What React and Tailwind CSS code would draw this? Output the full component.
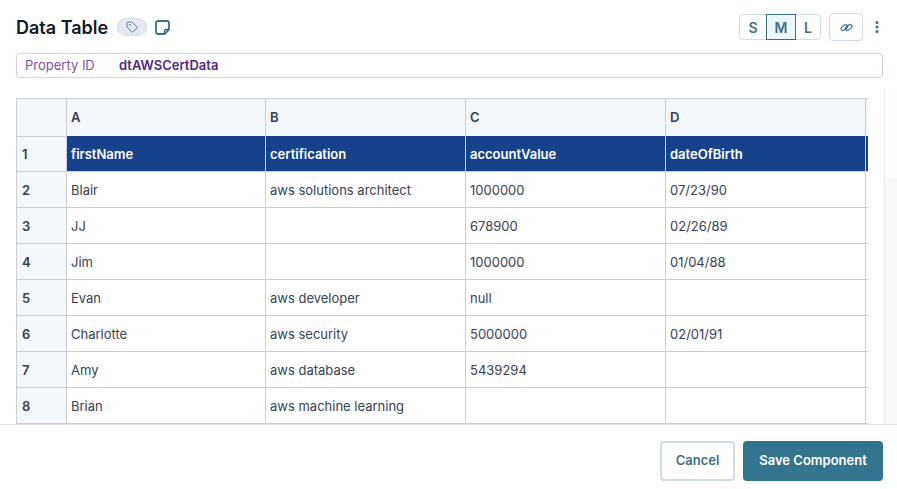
import { Tag } from "lucide-react";

const columns = ["A", "B", "C", "D"];
const headers = ["firstName", "certification", "accountValue", "dateOfBirth"];
const rows = [
    ["Blair", "aws solutions architect", "1000000", "07/23/90"],
    ["JJ", "", "678900", "02/26/89"],
    ["Jim", "", "1000000", "01/04/88"],
    ["Evan", "aws developer", "null", ""],
    ["Charlotte", "aws security", "5000000", "02/01/91"],
    ["Amy", "aws database", "5439294", ""],
    ["Brian", "aws machine learning", "", ""],
];

const gridCols = "grid grid-cols-[50px_199px_200px_200px_200px_3px]";

const NoteIcon = () => (
    <svg width="15" height="15" viewBox="0 0 15 15" fill="none" stroke="#3b6f84" strokeWidth="1.8" strokeLinejoin="round" className="ml-[8px]">
        <path d="M3 1h9a2 2 0 0 1 2 2v6.500L9.500 14H3a2 2 0 0 1-2-2V3a2 2 0 0 1 2-2Z" />
        <path d="M14 9.500h-3a1.500 1.500 0 0 0-1.500 1.500V14" strokeWidth="1.4" />
    </svg>
);

const ChainIcon = () => (
    <svg width="13" height="11" viewBox="0 0 16 14" fill="none" stroke="#3f6f85" strokeWidth="1.5">
        <rect x="0.8" y="4.6" width="9" height="5" rx="2.500" transform="rotate(-35 5.300 7.100)" />
        <rect x="6.200" y="4.400" width="9" height="5" rx="2.500" transform="rotate(-35 10.700 6.900)" />
    </svg>
);

const DotsIcon = () => (
    <svg width="4" height="12" viewBox="0 0 4 12" fill="#3f6f85" className="ml-[12px] mr-[6px]">
        <circle cx="2" cy="1.500" r="1.500" />
        <circle cx="2" cy="6" r="1.500" />
        <circle cx="2" cy="10.500" r="1.500" />
    </svg>
);

const App = () => {
    return (
        <div className="w-[897px] h-[489px] bg-white flex flex-col overflow-hidden font-['Inter',sans-serif]">
            <div className="h-[53px] pl-4 pr-3 flex items-center justify-between pt-[1px]">
                <div className="flex items-center">
                    <h1 className="text-[18px] font-semibold text-[#111827]">Data Table</h1>
                    <span className="ml-[9px] w-[30px] h-[18px] rounded-full bg-[#e3e9f1] border border-[#d5dde8] flex items-center justify-center">
                        <Tag size={12} strokeWidth={1.5} className="text-[#4a5f74]" />
                    </span>
                    <NoteIcon />
                </div>
                <div className="flex items-center">
                    <div className="flex h-[26px] border border-[#cfdde3] rounded-[4px] text-[14px] font-semibold text-[#3f6f85]">
                        <span className="w-[26px] flex items-center justify-center">S</span>
                        <span className="w-[30px] -my-px flex items-center justify-center bg-[#edf6fa] border border-[#3b6f84]">M</span>
                        <span className="w-[24px] flex items-center justify-center">L</span>
                    </div>
                    <span className="ml-[8px] w-[34px] h-[28px] border border-[#cfdde3] rounded-[4px] flex items-center justify-center">
                        <ChainIcon />
                    </span>
                    <DotsIcon />
                </div>
            </div>

            <div className="ml-4 mr-[14px] h-[25px] border border-[#dccbe3] rounded-[4px] flex items-center pl-2 text-[13px]">
                <span className="w-[94px] text-[#7e4fa3]">Property ID</span>
                <span className="font-semibold text-[#54287f]">dtAWSCertData</span>
            </div>

            <div className="flex-1 flex pl-4 pt-[20px] min-h-0">
                <div className="w-[852px] h-[326px] overflow-hidden border-t border-l border-[#cbced3] text-[13px]">
                    <div className={`${gridCols} h-[37px] bg-[#f3f6fa] font-semibold text-[#374151]`}>
                        <div className="border-r border-[#cbced3]" />
                        {columns.map((col) => (
                            <div key={col} className="border-r border-[#cbced3] flex items-center pl-1">{col}</div>
                        ))}
                    </div>
                    <div className={`${gridCols} h-[36px] bg-[#16428c] font-semibold text-white border-b border-[#cbced3]`}>
                        <div className="bg-[#f3f6fa] text-[#374151] border-t border-r border-[#cbced3] flex items-center pl-[5px] pt-[2px]">1</div>
                        {headers.map((name) => (
                            <div key={name} className="border-r border-[#c9d3e4] flex items-center pl-1 pt-[2px]">{name}</div>
                        ))}
                    </div>
                    {rows.map((row, i) => (
                        <div key={row[0]} className={`${gridCols} h-[36px] text-[#374151] border-b border-[#cbced3]`}>
                            <div className="bg-[#f3f6fa] font-semibold border-r border-[#cbced3] flex items-center pl-[5px] pt-[2px]">{i + 2}</div>
                            {row.map((value, j) => (
                                <div key={j} className="border-r border-[#cbced3] flex items-center pl-1 pt-[2px]">{value}</div>
                            ))}
                        </div>
                    ))}
                </div>
                <div className="ml-[16px] w-[13px] -mt-[10px] border-l border-[#eeeff1] flex flex-col">
                    <div className="h-[91px] bg-[#fdfdfd]" />
                    <div className="flex-1 bg-[#f9f9fa]" />
                </div>
            </div>

            <div className="h-[65px] border-t border-[#dfe2e6] flex items-center justify-end gap-2 pr-[14px] pt-2 text-[13px] font-semibold">
                <button className="w-[75px] h-[40px] rounded-[4px] border-2 border-[#cfdde3] text-[#3f6f85]">Cancel</button>
                <button className="w-[140px] h-[40px] rounded-[4px] bg-[#33748e] text-white">Save Component</button>
            </div>
        </div>
    );
};

export default App;
